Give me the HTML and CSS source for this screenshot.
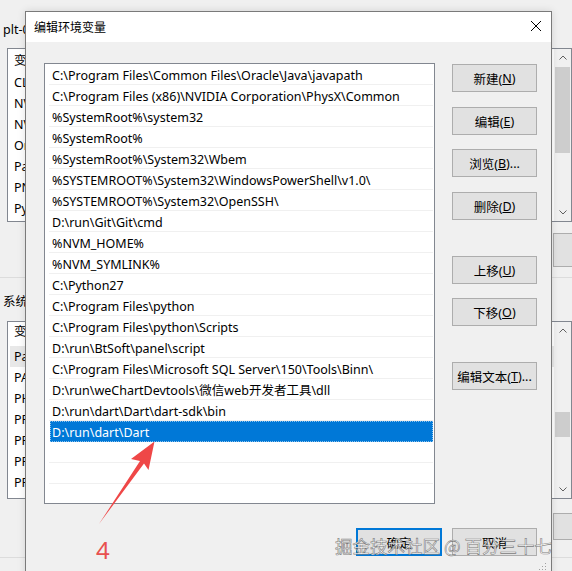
FILE: index.html
```html
<!DOCTYPE html>
<html lang="zh-CN">
<head>
<meta charset="utf-8">
<title>编辑环境变量</title>
<link rel="stylesheet" href="styles.css">
</head>
<body>
<div class="desk">
  <div class="bgwin">
    <div class="lbl">plt-0 的用户变量(U)</div>
    <div class="blist blist-user">
      <div class="bl-rows">
        <div class="bl-head">变量</div>
        <div class="bl-row">CLASSPATH</div>
        <div class="bl-row">NVM_HOME</div>
        <div class="bl-row">NVM_SYMLINK</div>
        <div class="bl-row">OneDrive</div>
        <div class="bl-row">Path</div>
        <div class="bl-row">PNPM_HOME</div>
        <div class="bl-row">PyCharm</div>
      </div>
      <div class="sb">
        <div class="sb-btn"><svg width="8" height="5" viewBox="0 0 8 5"><path d="M0.5 4.5 L4 1 L7.5 4.5" fill="none" stroke="#606060" stroke-width="1"/></svg></div>
        <div class="sb-track"><div class="sb-thumb" style="margin-top:1px;height:86px"></div></div>
        <div class="sb-btn"><svg width="8" height="5" viewBox="0 0 8 5"><path d="M0.5 0.5 L4 4 L7.5 0.5" fill="none" stroke="#606060" stroke-width="1"/></svg></div>
      </div>
    </div>
    <div class="brow brow-user">
      <div class="bbtn">新建(N)...</div>
      <div class="bbtn">编辑(E)...</div>
      <div class="bbtn">删除(D)</div>
    </div>
    <div class="sep sep-user"></div>
    <div class="lbl lbl-sys">系统变量(S)</div>
    <div class="blist blist-sys">
      <div class="bl-rows">
        <div class="bl-head bl-head-sys">变量</div>
        <div class="bl-row bl-sel">Path</div>
        <div class="bl-row">PATHEXT</div>
        <div class="bl-row">PHP_HOME</div>
        <div class="bl-row">PROCESSOR_ARCHITECTURE</div>
        <div class="bl-row">PROCESSOR_IDENTIFIER</div>
        <div class="bl-row">PROCESSOR_LEVEL</div>
        <div class="bl-row">PROCESSOR_REVISION</div>
      </div>
      <div class="sb">
        <div class="sb-btn"><svg width="8" height="5" viewBox="0 0 8 5"><path d="M0.5 4.5 L4 1 L7.5 4.5" fill="none" stroke="#606060" stroke-width="1"/></svg></div>
        <div class="sb-track"><div class="sb-thumb" style="margin-top:73px;height:25px"></div></div>
        <div class="sb-btn"><svg width="8" height="5" viewBox="0 0 8 5"><path d="M0.5 0.5 L4 4 L7.5 0.5" fill="none" stroke="#606060" stroke-width="1"/></svg></div>
      </div>
    </div>
    <div class="brow brow-sys">
      <div class="bbtn">新建(W)...</div>
      <div class="bbtn">编辑(I)...</div>
      <div class="bbtn">删除(L)</div>
    </div>
    <div class="sep sep-sys"></div>
  </div>

  <div class="dlg">
    <div class="dlg-title">
      <span class="dlg-caption">编辑环境变量</span>
      <svg class="close" width="10" height="10" viewBox="0 0 10 10"><path d="M0 0 L10 10 M10 0 L0 10" stroke="#000" stroke-width="1"/></svg>
    </div>
    <div class="dlg-body">
      <div class="dlg-main">
        <div class="plist">
          <div class="prow">C:\Program Files\Common Files\Oracle\Java\javapath</div>
          <div class="prow">C:\Program Files (x86)\NVIDIA Corporation\PhysX\Common</div>
          <div class="prow">%SystemRoot%\system32</div>
          <div class="prow">%SystemRoot%</div>
          <div class="prow">%SystemRoot%\System32\Wbem</div>
          <div class="prow">%SYSTEMROOT%\System32\WindowsPowerShell\v1.0\</div>
          <div class="prow">%SYSTEMROOT%\System32\OpenSSH\</div>
          <div class="prow">D:\run\Git\Git\cmd</div>
          <div class="prow">%NVM_HOME%</div>
          <div class="prow">%NVM_SYMLINK%</div>
          <div class="prow">C:\Python27</div>
          <div class="prow">C:\Program Files\python</div>
          <div class="prow">C:\Program Files\python\Scripts</div>
          <div class="prow">D:\run\BtSoft\panel\script</div>
          <div class="prow">C:\Program Files\Microsoft SQL Server\150\Tools\Binn\</div>
          <div class="prow">D:\run\weChartDevtools\微信web开发者工具\dll</div>
          <div class="prow">D:\run\dart\Dart\dart-sdk\bin</div>
          <div class="prow prow-sel">D:\run\dart\Dart</div>
          <div class="prow"></div>
          <div class="prow"></div>
          <div class="prow"></div>
        </div>
        <div class="btncol">
          <div class="btn">新建(<u>N</u>)</div>
          <div class="btn btn-n1">编辑(<u>E</u>)</div>
          <div class="btn">浏览(<u>B</u>)...</div>
          <div class="btn btn-n1">删除(<u>D</u>)</div>
          <div class="btn btn-group">上移(<u>U</u>)</div>
          <div class="btn">下移(<u>O</u>)</div>
          <div class="btn btn-group">编辑文本(<u>T</u>)...</div>
        </div>
      </div>
      <div class="dlg-foot">
        <div class="btn btn-ok">确定</div>
        <div class="btn">取消</div>
      </div>
    </div>
    <svg class="grip" width="10" height="10" viewBox="0 0 10 10">
      <rect x="7" y="1" width="1" height="1" fill="#a0a0a0"/>
      <rect x="4" y="4" width="1" height="1" fill="#a0a0a0"/>
      <rect x="7" y="4" width="1" height="1" fill="#a0a0a0"/>
      <rect x="1" y="7" width="1" height="1" fill="#a0a0a0"/>
      <rect x="4" y="7" width="1" height="1" fill="#a0a0a0"/>
      <rect x="7" y="7" width="1" height="1" fill="#a0a0a0"/>
    </svg>
  </div>

  <svg class="arrow" width="572" height="571" viewBox="0 0 572 571">
    <polygon points="99,524 140,461 131,459 154.5,441.5 148.5,470 144,463.5" fill="#ef4747"/>
  </svg>
  <div class="num">4</div>
  <div class="wm">掘金技术社区 @ 百分三十七</div>
</div>
</body>
</html>
```

FILE: styles.css
```css
* { box-sizing: border-box; }
html, body { margin: 0; padding: 0; }
body {
  width: 572px;
  height: 571px;
  overflow: hidden;
  background: #f0f0f0;
  font-family: "Noto Sans", "Noto Sans CJK SC", sans-serif;
  font-size: 12.5px;
  color: #000;
}
.desk {
  position: relative;
  width: 572px;
  height: 571px;
  overflow: hidden;
  background: #f0f0f0;
}

/* background window */
.bgwin { width: 660px; padding: 20px 0 0 7px; }
.lbl { height: 20px; line-height: 20px; margin-left: -4px; white-space: nowrap; }
.lbl-sys { margin-top: 14px; }
.blist {
  width: 565px;
  background: #fff;
  border: 1px solid #828790;
  display: flex;
  overflow: hidden;
}
.blist-user { margin-top: 8px; height: 174px; }
.blist-sys { margin-top: 9px; height: 178px; }
.bl-rows { flex: 1; padding-left: 6px; white-space: nowrap; overflow: hidden; }
.bl-head { height: 23px; line-height: 23px; }
.bl-head-sys { height: 24px; line-height: 20px; }
.bl-row { height: 21px; line-height: 21px; }
.bl-sel { background: #e8e8e8; margin-left: -4px; padding-left: 4px; }
.sb { width: 17px; background: #f0f0f0; display: flex; flex-direction: column; }
.sb-btn { height: 17px; display: flex; align-items: center; justify-content: center; }
.sb-btn svg { display: block; }
.sb-track { flex: 1; }
.sb-thumb { margin-left: 1px; margin-right: 1px; background: #cdcdcd; }
.brow { width: 565px; display: flex; justify-content: flex-end; gap: 8px; }
.brow-user { margin-top: 11px; height: 34px; }
.brow-sys { margin-top: 14px; height: 27px; }
.bbtn {
  flex: none;
  width: 100px;
  height: 100%;
  background: #e1e1e1;
  border: 1px solid #adadad;
  display: flex;
  align-items: center;
  justify-content: center;
  white-space: nowrap;
}
.bbtn:last-child { margin-right: -81px; }
.sep { height: 1px; background: #dcdcdc; width: 660px; margin-left: -7px; }
.sep-user { margin-top: 10px; }
.sep-sys { margin-top: 17px; }

/* dialog */
.dlg {
  position: absolute;
  left: 25px;
  top: 11px;
  width: 527px;
  height: 566px;
  border: 1px solid #7a7a7a;
  background: #f0f0f0;
  box-shadow: 0 0 8px rgba(0, 0, 0, 0.12);
}
.dlg-title {
  height: 30px;
  background: #fff;
  display: flex;
  align-items: center;
  justify-content: space-between;
  padding: 0 10px 0 8px;
}
.dlg-caption { font-size: 12px; font-family: "Noto Sans CJK SC", sans-serif; margin-top: -1px; }
.close { display: block; margin-top: -2px; }
.dlg-body { padding: 21px 14px 0 18px; }
.dlg-main { display: flex; gap: 17px; }
.plist {
  width: 391px;
  height: 441px;
  background: #fff;
  border: 1px solid #828790;
  padding: 0 1px 0 4px;
  overflow: hidden;
}
.prow {
  height: 21px;
  line-height: 21px;
  padding: 1px 0 0 3px;
  border-bottom: 1px solid #f0f0f0;
  white-space: nowrap;
  overflow: hidden;
}
.prow-sel {
  background: #0078d7;
  color: #fff;
  margin-left: 1px;
  padding-left: 2px;
  border-bottom-color: #0078d7;
  outline: 1px dotted rgba(255, 255, 255, 0.55);
  outline-offset: -1px;
}
.btncol { width: 85px; display: flex; flex-direction: column; gap: 14px; padding-top: 1px; }
.btn {
  height: 28px;
  background: #e1e1e1;
  border: 1px solid #adadad;
  display: flex;
  align-items: center;
  justify-content: center;
  white-space: nowrap;
  font-size: 12.5px;
}
.btn u { text-underline-offset: 1px; }
.btn-n1 { margin-top: 1px; }
.btn-group { margin-top: 22px; }
.dlg-foot { display: flex; justify-content: flex-end; gap: 10px; margin-top: 24px; }
.dlg-foot .btn { width: 85px; }
.dlg-foot .btn-ok { width: 86px; border: 2px solid #0078d7; }
.grip { position: absolute; right: 3px; top: 550px; }

/* annotations */
.arrow { position: absolute; left: 0; top: 0; pointer-events: none; }
.num {
  position: absolute;
  left: 96px;
  top: 538px;
  font-size: 24px;
  line-height: 24px;
  color: #e8504f;
  font-family: "Noto Sans", sans-serif;
}
.wm {
  position: absolute;
  left: 335px;
  top: 534px;
  font-size: 17.5px;
  line-height: 24px;
  white-space: nowrap;
  font-family: "Noto Sans CJK SC", sans-serif;
  color: rgba(255, 255, 255, 0.85);
  -webkit-text-stroke: 0.6px rgba(90, 90, 90, 0.8);
}
```
